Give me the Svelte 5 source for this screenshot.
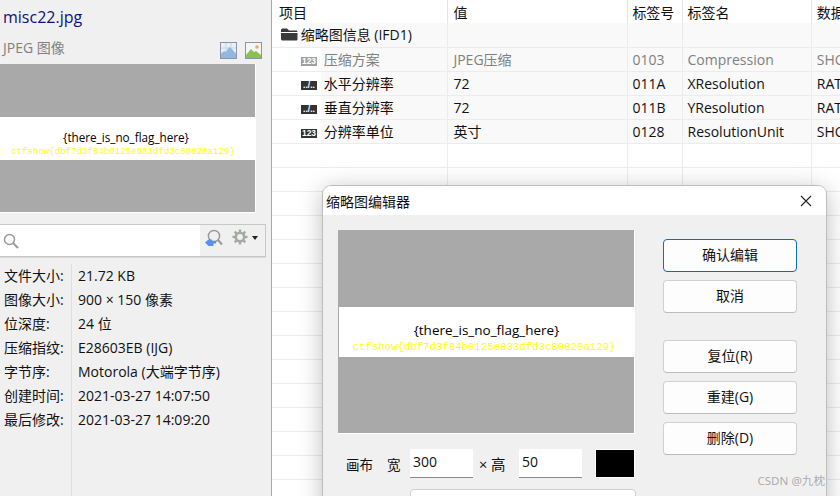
<script>
  const info = [
    ['文件大小:', '21.72 KB'],
    ['图像大小:', '900 × 150 像素'],
    ['位深度:', '24 位'],
    ['压缩指纹:', 'E28603EB (IJG)'],
    ['字节序:', 'Motorola (大端字节序)'],
    ['创建时间:', '2021-03-27 14:07:50'],
    ['最后修改:', '2021-03-27 14:09:20']
  ];
  const rows = [
    { icon: 'num', dim: true, name: '压缩方案', value: 'JPEG压缩', tag: '0103', tagName: 'Compression', type: 'SHORT' },
    { icon: 'frac', name: '水平分辨率', value: '72', tag: '011A', tagName: 'XResolution', type: 'RATIONAL' },
    { icon: 'frac', name: '垂直分辨率', value: '72', tag: '011B', tagName: 'YResolution', type: 'RATIONAL' },
    { icon: 'num', name: '分辨率单位', value: '英寸', tag: '0128', tagName: 'ResolutionUnit', type: 'SHORT' }
  ];
  const blanks = Array.from({ length: 15 });
</script>

{#snippet thumb(cls)}
  <div class="thumb {cls}">
    <div class="band">
      <div class="t1">&#123;there_is_no_flag_here&#125;</div>
      <div class="t2">ctfshow&#123;dbf7d3f84b0125e833dfd3c80820a129&#125;</div>
    </div>
  </div>
{/snippet}

<div class="app">
  <aside class="side">
    <div class="name">misc22.jpg</div>
    <div class="kind">
      <span>JPEG 图像</span>
      <div class="kind-icons">
        <svg width="17" height="17" viewBox="0 0 17 17">
          <rect x="0.5" y="0.5" width="16" height="16" fill="#e8f0f8" stroke="#8a94a6" />
          <path d="M1 6H16M1 11H16M6 1V16M11 1V16" stroke="#c8d4e2" stroke-width="1" />
          <path d="M1 16V12L4 9L6 10L9 5L12 7L16 12V16Z" fill="#93b8de" />
        </svg>
        <svg width="17" height="17" viewBox="0 0 17 17">
          <rect x="0.5" y="0.5" width="16" height="16" fill="#f4f6f4" stroke="#8a94a6" />
          <circle cx="12" cy="5" r="1.8" fill="#f4a36c" />
          <path d="M1 16V13L6 7L9 10L11 9L16 13V16Z" fill="#8cc152" />
        </svg>
      </div>
    </div>
    {@render thumb('small')}
    <div class="search">
      <div class="search-input">
        <svg width="16" height="16" viewBox="0 0 16 16" fill="none" stroke="#9a9a9a" stroke-width="1.5">
          <circle cx="6.5" cy="6.5" r="5" />
          <path d="M10 10L15 15" stroke-width="2" />
        </svg>
      </div>
      <div class="search-tools">
        <svg class="find" width="18" height="20" viewBox="0 0 18 20" fill="none">
          <circle cx="9" cy="7" r="5.6" stroke="#999" stroke-width="1.5" />
          <path d="M13 11L17 15.5" stroke="#999" stroke-width="2" />
          <path d="M0 13.5L3.5 10.5H7V12H11V14.5H8.5V17H3.5Z" fill="#5b8fef" />
        </svg>
        <svg class="gear" width="16" height="16" viewBox="0 0 16 16" fill="none">
          <circle cx="8" cy="8" r="4.2" stroke="#a3a9a3" stroke-width="2.6" />
          <path d="M8 0.5V3M8 13V15.5M0.5 8H3M13 8H15.5M2.7 2.7L4.5 4.5M11.5 11.5L13.3 13.3M13.3 2.7L11.5 4.5M4.5 11.5L2.7 13.3" stroke="#a3a9a3" stroke-width="2.4" />
        </svg>
        <span class="caret"></span>
      </div>
    </div>
    <div class="info">
      {#each info as [label, value]}
        <div class="info-label">{label}</div>
        <div class="info-value">{value}</div>
      {/each}
    </div>
  </aside>

  <main class="grid">
    <table>
      <colgroup>
        <col style="width:175px" />
        <col style="width:180px" />
        <col style="width:54px" />
        <col style="width:129px" />
        <col style="width:60px" />
      </colgroup>
      <thead>
        <tr>
          <th class="first">项目</th>
          <th class="val">值</th>
          <th class="tag">标签号</th>
          <th>标签名</th>
          <th>数据类型</th>
        </tr>
      </thead>
      <tbody>
        <tr class="head-row">
          <td class="group">
            <svg width="17" height="13" viewBox="0 0 17 13">
              <path d="M0 2C0 1 1 0.5 2 0.5H6L8 2.5H15C16 2.5 16.5 3 16.5 4H0ZM0 5H16.5V11C16.5 12 16 12.5 15 12.5H2C1 12.5 0 12 0 11Z" fill="#3a3a3a" />
            </svg>
            缩略图信息 (IFD1)
          </td>
          <td></td><td></td><td></td><td></td>
        </tr>
        {#each rows as row}
          <tr class="data" class:dim={row.dim}>
            <td class="item">
              <span class="badge">{row.icon === 'num' ? '123' : '../..'}</span>
              {row.name}
            </td>
            <td class="val">{row.value}</td>
            <td class="tag">{row.tag}</td>
            <td>{row.tagName}</td>
            <td>{row.type}</td>
          </tr>
        {/each}
        {#each blanks as _}
          <tr><td></td><td></td><td></td><td></td><td></td></tr>
        {/each}
      </tbody>
    </table>
  </main>

  <section class="dialog">
    <header class="dialog-title">
      <span>缩略图编辑器</span>
      <svg width="12" height="12" viewBox="0 0 12 12" stroke="#222" fill="none" stroke-width="1.1">
        <path d="M1 1L11 11M11 1L1 11" />
      </svg>
    </header>
    <div class="dialog-body">
      <div class="left">
        {@render thumb('large')}
        <div class="canvas-row">
          <span class="lbl canvas">画布</span>
          <span class="lbl wide">宽</span>
          <div class="field">300</div>
          <span class="lbl times">× 高</span>
          <div class="field">50</div>
          <div class="swatch"></div>
        </div>
        <div class="next-field"></div>
      </div>
      <div class="buttons">
        <button class="primary">确认编辑</button>
        <button>取消</button>
        <button class="gap">复位(R)</button>
        <button>重建(G)</button>
        <button>删除(D)</button>
      </div>
    </div>
  </section>

  <div class="watermark">CSDN @九枕</div>
</div>

<style>
  :global(body) {
    margin: 0;
  }

  .app {
    position: relative;
    display: flex;
    width: 840px;
    height: 496px;
    overflow: hidden;
    font-family: "Open Sans", "Noto Sans CJK SC", sans-serif;
    font-size: 14px;
    color: #111;
    background: #fff;
  }

  .side {
    display: flex;
    flex-direction: column;
    flex: none;
    box-sizing: border-box;
    width: 272px;
    background: #f0f0f0;
    border-right: 1px solid #a8a8a8;
  }

  .side > * {
    flex: none;
  }

  .name {
    height: 37px;
    padding: 5px 0 0 3px;
    box-sizing: border-box;
    font-size: 16px;
    line-height: 24px;
    color: #10107a;
  }

  .kind {
    display: flex;
    justify-content: space-between;
    align-items: flex-start;
    height: 27px;
    padding: 0 9px 0 3px;
    font-size: 14px;
    line-height: 22px;
    color: #808080;
  }

  .kind-icons {
    display: flex;
    gap: 8px;
    padding-top: 5px;
  }

  .thumb {
    position: relative;
    display: flex;
    flex-direction: column;
    justify-content: center;
    background: #a9a9a9;
    box-sizing: border-box;
  }

  .thumb.small {
    width: 256px;
    height: 149px;
    border-right: 1px solid #fff;
    border-bottom: 1px solid #fff;
  }

  .thumb.large {
    width: 297px;
    height: 204px;
    border-right: 1px solid #fff;
    border-bottom: 1px solid #fff;
  }

  .band {
    display: flex;
    flex-direction: column;
    align-items: center;
    background: #fff;
    box-sizing: border-box;
    color: #000;
  }

  .small .band {
    height: 43px;
    padding: 12px 4px 0 0;
    margin-right: -1px;
  }

  .large .band {
    height: 50px;
    padding-top: 14px;
    margin-left: 1px;
  }

  .t1 {
    font-weight: 400;
    white-space: nowrap;
  }

  .small .t1 {
    font-size: 11.7px;
    line-height: 16px;
  }

  .large .t1 {
    font-size: 13.5px;
    line-height: 19px;
  }

  .t2 {
    font-family: "Liberation Mono", monospace;
    color: #ffff00;
    white-space: nowrap;
  }

  .small .t2 {
    font-size: 9.1px;
    line-height: 10px;
    margin: 2px 6px 0 0;
  }

  .large .t2 {
    font-size: 10.7px;
    line-height: 12px;
    margin: 1px 5px 0 0;
  }

  .search {
    display: flex;
    width: 266px;
    height: 33px;
    margin-top: 11px;
    box-sizing: border-box;
    border: 1px solid #c8c8c8;
    border-left: none;
    box-shadow: 0 1px 0 #d8d8d8;
  }

  .search-input {
    flex: 1;
    display: flex;
    align-items: center;
    padding: 0 0 0 3px;
    background: #fff;
  }

  .search-tools {
    display: flex;
    align-items: flex-start;
    width: 65px;
    box-sizing: border-box;
    padding: 4px 0 0 5px;
  }

  .gear {
    margin: 0 0 0 9px;
  }

  .caret {
    margin: 7px 0 0 4px;
    border-left: 3.5px solid transparent;
    border-right: 3.5px solid transparent;
    border-top: 4px solid #222;
  }

  .side > .info {
    flex: 1;
    display: grid;
    grid-template-columns: 71px 1fr;
    grid-auto-rows: 24px;
    margin-top: 7px;
    line-height: 24px;
    background: linear-gradient(#d6dfe8, #d6dfe8) 71px 0 / 1px 100% no-repeat;
  }

  .info-label {
    padding-left: 4px;
    white-space: nowrap;
  }

  .info-value {
    padding-left: 7px;
    white-space: nowrap;
  }

  .grid {
    flex: 1;
    min-width: 0;
    overflow: hidden;
  }

  table {
    width: 600px;
    table-layout: fixed;
    border-collapse: collapse;
    font-size: 14px;
  }

  th {
    height: 23px;
    padding: 0 0 0 5px;
    box-sizing: border-box;
    font-weight: 400;
    text-align: left;
    white-space: nowrap;
    overflow: hidden;
    background: #fff;
    border-right: 1px solid #e4e4e4;
  }

  th.first {
    padding-left: 7px;
  }

  td {
    height: 24px;
    padding: 0 0 0 5px;
    box-sizing: border-box;
    background: #fff;
    border-right: 1px solid #ececec;
    border-bottom: 1px solid #ececec;
    white-space: nowrap;
    overflow: hidden;
    line-height: 23px;
  }

  .val {
    padding-left: 5.5px;
  }

  .tag {
    padding-left: 4px;
  }

  .head-row td,
  .data td {
    background: #f9f9f9;
  }

  .head-row td.group {
    padding-left: 9px;
    background: linear-gradient(to right, #fff 26px, #f9f9f9 26px);
  }

  td.group svg {
    margin-right: -1px;
    vertical-align: -1px;
  }

  .data td.item {
    padding-left: 29px;
    background: linear-gradient(to right, #fff 49px, #f9f9f9 49px);
  }

  .badge {
    display: inline-block;
    width: 16px;
    height: 9px;
    margin-right: 3px;
    background: #333;
    color: #fff;
    font-family: "Liberation Sans", sans-serif;
    font-size: 8.5px;
    font-weight: 700;
    line-height: 9px;
    text-align: center;
    vertical-align: 1px;
  }

  tr.dim td {
    color: #808080;
  }

  tr.dim .badge {
    background: #a0a0a0;
  }

  .dialog {
    position: absolute;
    left: 323px;
    top: 186px;
    width: 503px;
    height: 330px;
    background: #f0f0f0;
    border-radius: 8px 8px 0 0;
    box-shadow: 0 0 0 1px #bdbdbd, 0 4px 24px rgba(0, 0, 0, 0.28);
  }

  .dialog-title {
    display: flex;
    justify-content: space-between;
    align-items: center;
    height: 29px;
    padding: 0 14px 0 3px;
    background: #fff;
    border-radius: 8px 8px 0 0;
    font-size: 14px;
  }

  .dialog-body {
    display: flex;
    padding: 15px 0 0 15px;
  }

  .left {
    width: 298px;
  }

  .canvas-row {
    display: flex;
    align-items: center;
    height: 29px;
    margin-top: 15px;
    font-size: 13.5px;
  }

  .lbl {
    white-space: nowrap;
  }

  .canvas {
    margin-left: 8px;
    width: 41px;
  }

  .wide {
    width: 23px;
  }

  .times {
    width: 46px;
    padding-left: 6px;
    box-sizing: border-box;
    font-size: 14.5px;
  }

  .field {
    box-sizing: border-box;
    width: 63px;
    height: 29px;
    padding: 0 0 2px 3px;
    background: #fff;
    border-bottom: 1px solid #8a8a8a;
    font-size: 14px;
    line-height: 25px;
  }

  .swatch {
    box-sizing: border-box;
    width: 40px;
    height: 29px;
    margin-left: 13px;
    background: #000;
    border: 1px solid #fff;
  }

  .next-field {
    width: 226px;
    height: 30px;
    margin: 11px 0 0 72px;
    background: #fff;
    border: 1px solid #d0d0d0;
    border-radius: 4px;
    box-sizing: border-box;
  }

  .buttons {
    display: flex;
    flex-direction: column;
    gap: 8px;
    padding: 9px 0 0 27px;
  }

  button {
    width: 134px;
    height: 33px;
    padding: 0 0 3px;
    box-sizing: border-box;
    background: #fdfdfd;
    border: 1px solid #d0d0d0;
    border-bottom-color: #bcbcbc;
    border-radius: 4px;
    font: inherit;
    font-size: 14px;
    color: #111;
  }

  button.primary {
    border: 1px solid #0f6cbd;
  }

  button.gap {
    margin-top: 19px;
  }

  .watermark {
    position: absolute;
    right: 15px;
    bottom: 7px;
    font-family: "Noto Sans", "Noto Sans CJK SC", sans-serif;
    font-size: 11.6px;
    line-height: 16px;
    color: rgba(130, 130, 130, 0.65);
  }
</style>
